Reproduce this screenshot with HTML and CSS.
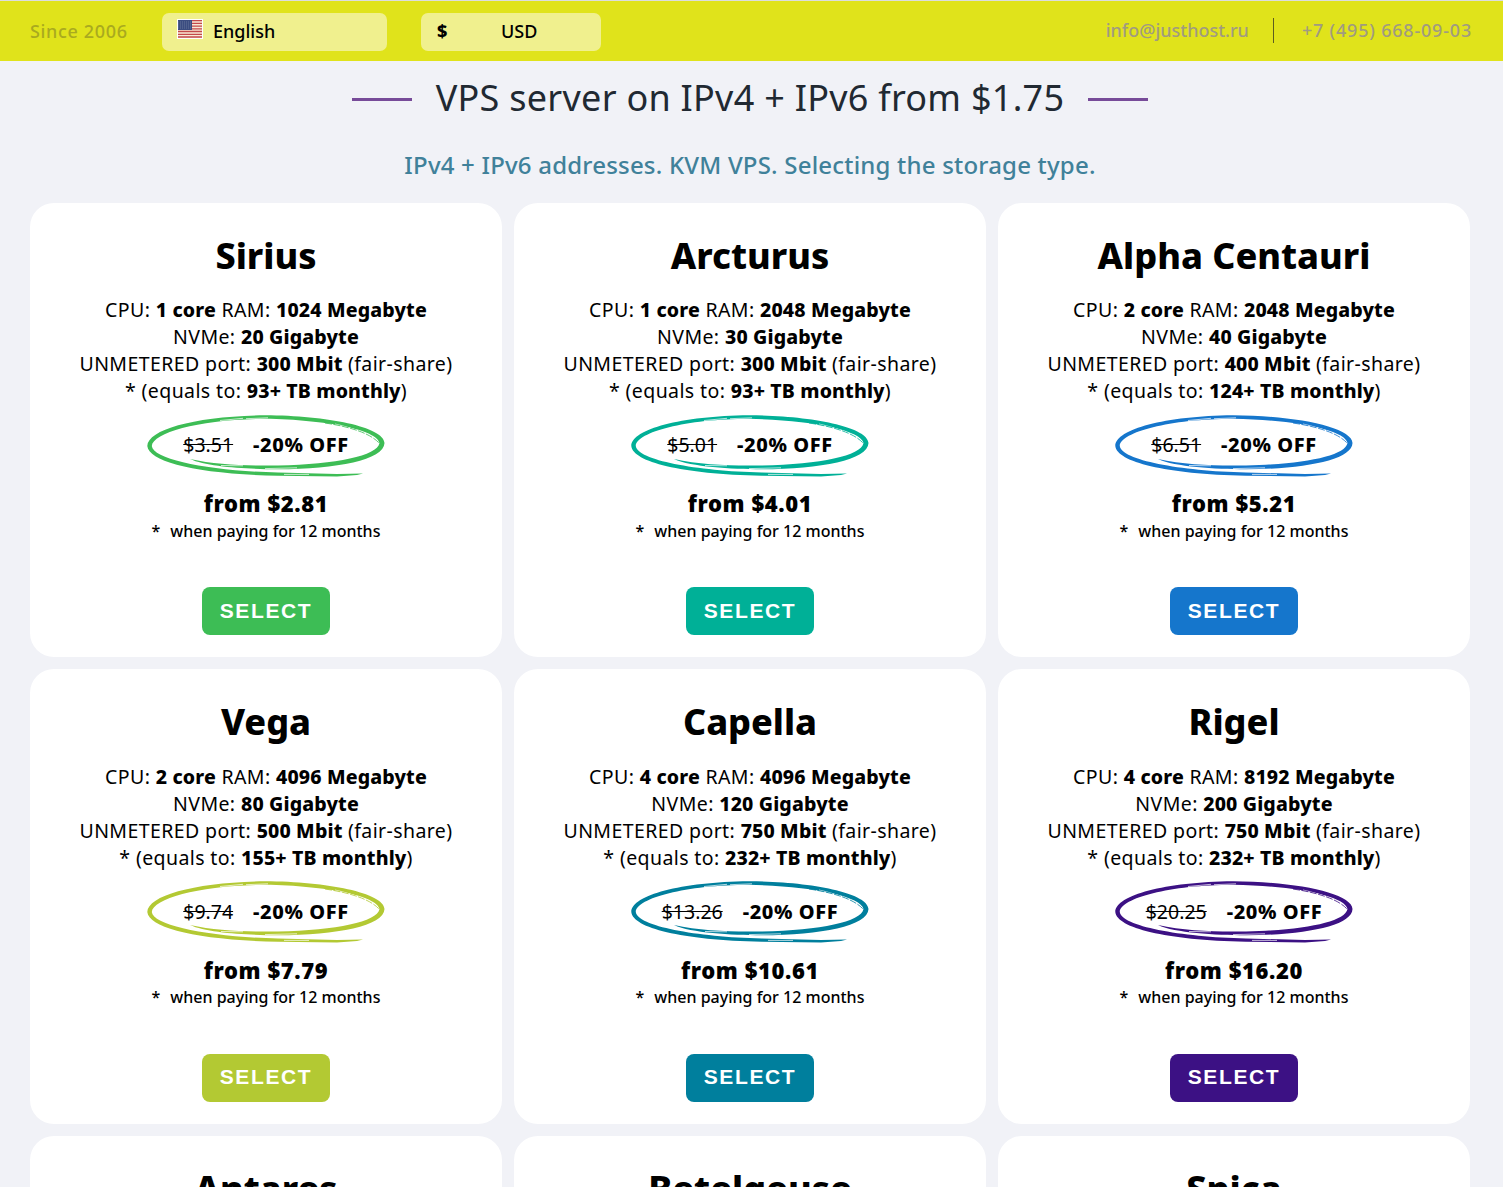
FILE: index.html
```html
<!DOCTYPE html>
<html lang="en">
<head>
    <meta charset="utf-8">
    <title>VPS server</title>
    <link rel="stylesheet" href="styles.css">
</head>
<body>

<svg class="sprite">
    <symbol id="oval" viewBox="0 0 238 62">
        <path fill="currentColor" d="M43 44C70 50 100 51 131 50.5C190 49 230 41 232.500 28C230 15 180 4.800 118 3.800C55 4 6 17 4.800 31C6 45 65 56 131 57.500L190 59L216 58.500L210 60L190 61.500L131 60.800C50 59 2 47 .3 31C1 14 50 1 118 .3C180 .5 237 12 237.500 28C237 45 190 54 131 54.300C100 54 60 52 43 44Z"/>
        <path fill="none" stroke="#fff" stroke-width=".7" d="M73 5.500L96 3.300M99 3.700L121 2.800M137 59.400H162M74 50.500L96 50.800M188 9C206 13 222 19 230 27M118 53.600L150 52.800"/>
        <path fill="none" stroke="currentColor" stroke-width=".8" stroke-dasharray="7 1.500" d="M178 8C205 12 224 19 232 28"/>
    </symbol>
</svg>

<header class="topbar">
    <span class="since">Since 2006</span>
    <div class="lang">
        <svg class="flag" width="26" height="20" viewBox="0 0 26 20">
            <rect width="26" height="20" fill="#fff"/>
            <rect x="1" y="1" width="24" height="18" fill="#f8e9d5"/>
            <path stroke="#c4484b" stroke-width="1.300" d="M1 1.700h24M1 4.400h24M1 7.100h24M1 9.800h24M1 12.500h24M1 15.300h24M1 18h24"/>
            <rect x="1" y="1" width="14" height="10" fill="#3b4c80"/>
            <path stroke="#7886a8" stroke-width=".7" stroke-dasharray="1 1" d="M1 3h14M1 5h14M1 7h14M1 9h14"/>
        </svg>
        <span>English</span>
    </div>
    <div class="currency"><b>$</b><span>USD</span></div>
    <div class="contacts">
        <span class="mail">info@justhost.ru</span>
        <span class="phone">+7 (495) 668-09-03</span>
    </div>
</header>

<main>
    <h1>VPS server on IPv4 + IPv6 from $1.75</h1>
    <p class="subtitle">IPv4 + IPv6 addresses. KVM VPS. Selecting the storage type.</p>

    <div class="plans">
        <div class="card green">
            <h2>Sirius</h2>
            <div class="specs">
                <div>CPU: <b>1 core</b> RAM: <b>1024 Megabyte</b></div>
                <div>NVMe: <b>20 Gigabyte</b></div>
                <div>UNMETERED port: <b>300 Mbit</b> (fair-share)</div>
                <div>* (equals to: <b>93+ TB monthly</b>)</div>
            </div>
            <div class="discount"><svg><use href="#oval"/></svg><s>$3.51</s><b>-20% OFF</b></div>
            <div class="price">from $2.81</div>
            <div class="note"><span>*</span>when paying for 12 months</div>
            <button>SELECT</button>
        </div>
        <div class="card teal">
            <h2>Arcturus</h2>
            <div class="specs">
                <div>CPU: <b>1 core</b> RAM: <b>2048 Megabyte</b></div>
                <div>NVMe: <b>30 Gigabyte</b></div>
                <div>UNMETERED port: <b>300 Mbit</b> (fair-share)</div>
                <div>* (equals to: <b>93+ TB monthly</b>)</div>
            </div>
            <div class="discount"><svg><use href="#oval"/></svg><s>$5.01</s><b>-20% OFF</b></div>
            <div class="price">from $4.01</div>
            <div class="note"><span>*</span>when paying for 12 months</div>
            <button>SELECT</button>
        </div>
        <div class="card blue">
            <h2>Alpha Centauri</h2>
            <div class="specs">
                <div>CPU: <b>2 core</b> RAM: <b>2048 Megabyte</b></div>
                <div>NVMe: <b>40 Gigabyte</b></div>
                <div>UNMETERED port: <b>400 Mbit</b> (fair-share)</div>
                <div>* (equals to: <b>124+ TB monthly</b>)</div>
            </div>
            <div class="discount"><svg><use href="#oval"/></svg><s>$6.51</s><b>-20% OFF</b></div>
            <div class="price">from $5.21</div>
            <div class="note"><span>*</span>when paying for 12 months</div>
            <button>SELECT</button>
        </div>
        <div class="card lime">
            <h2>Vega</h2>
            <div class="specs">
                <div>CPU: <b>2 core</b> RAM: <b>4096 Megabyte</b></div>
                <div>NVMe: <b>80 Gigabyte</b></div>
                <div>UNMETERED port: <b>500 Mbit</b> (fair-share)</div>
                <div>* (equals to: <b>155+ TB monthly</b>)</div>
            </div>
            <div class="discount"><svg><use href="#oval"/></svg><s>$9.74</s><b>-20% OFF</b></div>
            <div class="price">from $7.79</div>
            <div class="note"><span>*</span>when paying for 12 months</div>
            <button>SELECT</button>
        </div>
        <div class="card sea">
            <h2>Capella</h2>
            <div class="specs">
                <div>CPU: <b>4 core</b> RAM: <b>4096 Megabyte</b></div>
                <div>NVMe: <b>120 Gigabyte</b></div>
                <div>UNMETERED port: <b>750 Mbit</b> (fair-share)</div>
                <div>* (equals to: <b>232+ TB monthly</b>)</div>
            </div>
            <div class="discount"><svg><use href="#oval"/></svg><s>$13.26</s><b>-20% OFF</b></div>
            <div class="price">from $10.61</div>
            <div class="note"><span>*</span>when paying for 12 months</div>
            <button>SELECT</button>
        </div>
        <div class="card purple">
            <h2>Rigel</h2>
            <div class="specs">
                <div>CPU: <b>4 core</b> RAM: <b>8192 Megabyte</b></div>
                <div>NVMe: <b>200 Gigabyte</b></div>
                <div>UNMETERED port: <b>750 Mbit</b> (fair-share)</div>
                <div>* (equals to: <b>232+ TB monthly</b>)</div>
            </div>
            <div class="discount"><svg><use href="#oval"/></svg><s>$20.25</s><b>-20% OFF</b></div>
            <div class="price">from $16.20</div>
            <div class="note"><span>*</span>when paying for 12 months</div>
            <button>SELECT</button>
        </div>
        <div class="card"><h2>Antares</h2></div>
        <div class="card"><h2>Betelgeuse</h2></div>
        <div class="card"><h2>Spica</h2></div>
    </div>
</main>

</body>
</html>
```
FILE: styles.css
```css
* {
    box-sizing: border-box;
}
body {
    margin: 0;
    height: 1187px;
    overflow: hidden;
    background: #f1f2f7;
    color: #000;
    font-family: "Noto Sans", sans-serif;
}
.sprite {
    display: none;
}
.topbar {
    display: flex;
    align-items: center;
    height: 61px;
    padding: 2px 31px 0 30px;
    border-top: 1px solid #dcdddf;
    background: #e0e31b;
    font-size: 18px;
    font-weight: 500;
}
.topbar span, .topbar b {
    padding-bottom: 2px;
}
.since {
    width: 132px;
    color: #a9aa1f;
    letter-spacing: .65px;
}
.lang, .currency {
    display: flex;
    align-items: center;
    height: 38px;
    border-radius: 7px;
    background: #f0f08e;
}
.lang {
    width: 225px;
    padding-left: 15px;
}
.flag {
    margin: -6px 10px 0 0;
}
.currency {
    width: 180px;
    margin-left: 34px;
    padding-left: 16px;
}
.currency b {
    width: 64px;
}
.contacts {
    display: flex;
    align-items: center;
    margin-left: auto;
    margin-top: -3px;
    color: #a09b80;
}
.contacts .mail {
    padding: 0 24px 0 0;
    border-right: 1px solid #5c5d20;
    line-height: 25px;
}
.phone {
    padding-left: 28px;
    letter-spacing: .8px;
}
main {
    width: 1500px;
}
h1 {
    display: flex;
    align-items: center;
    justify-content: center;
    gap: 24px;
    height: 75.900px;
    margin: 0;
    padding-bottom: 2px;
    color: #212932;
    font-size: 36px;
    font-weight: 400;
    letter-spacing: .27px;
}
h1::before, h1::after {
    content: "";
    width: 60px;
    height: 3px;
    margin-top: 3px;
    background: #774b99;
}
.subtitle {
    height: 66px;
    margin: 0;
    padding-top: 13px;
    color: #40819a;
    font-size: 24px;
    font-weight: 500;
    line-height: 30px;
    letter-spacing: .2px;
    text-align: center;
}
.plans {
    display: grid;
    grid-template-columns: repeat(3, 472px);
    grid-auto-rows: 454.500px;
    gap: 12px;
    padding-left: 30px;
}
.card {
    display: flex;
    flex-direction: column;
    align-items: center;
    padding-top: 30px;
    border-radius: 24px;
    background: #fff;
    white-space: nowrap;
}
h2 {
    margin: 0;
    height: 63.200px;
    font-size: 36px;
    font-weight: 800;
    line-height: 46px;
}
b {
    font-weight: 800;
}
.specs {
    font-size: 19.500px;
    line-height: 27px;
    letter-spacing: .4px;
    text-align: center;
}
.specs b {
    letter-spacing: .15px;
}
.discount {
    position: relative;
    display: flex;
    align-items: center;
    justify-content: center;
    gap: 20px;
    width: 238px;
    height: 62px;
    margin-top: 10.800px;
    padding-bottom: 2px;
    font-size: 19.500px;
}
.discount svg {
    position: absolute;
    left: 0;
    top: 0;
    width: 238px;
    height: 62px;
    color: var(--color);
}
.discount b {
    font-size: 20px;
    letter-spacing: .6px;
}
.price {
    margin-top: 10.200px;
    font-size: 22px;
    font-weight: 900;
    line-height: 32px;
    letter-spacing: .6px;
}
.note {
    margin-top: .500px;
    font-size: 16px;
    font-weight: 500;
    line-height: 22px;
}
.note span {
    margin-right: 10px;
}
button {
    width: 128px;
    height: 48px;
    margin-top: 45.500px;
    padding: 0 0 1px;
    border: 0;
    border-radius: 8px;
    background: var(--color);
    color: #fff;
    font: bold 21px "Liberation Sans", Arial, sans-serif;
    letter-spacing: 1.600px;
}
.green {
    --color: #3dbd55;
}
.teal {
    --color: #00b097;
}
.blue {
    --color: #1576cc;
}
.lime {
    --color: #b3c933;
}
.sea {
    --color: #007f9d;
}
.purple {
    --color: #3c1184;
}
```
